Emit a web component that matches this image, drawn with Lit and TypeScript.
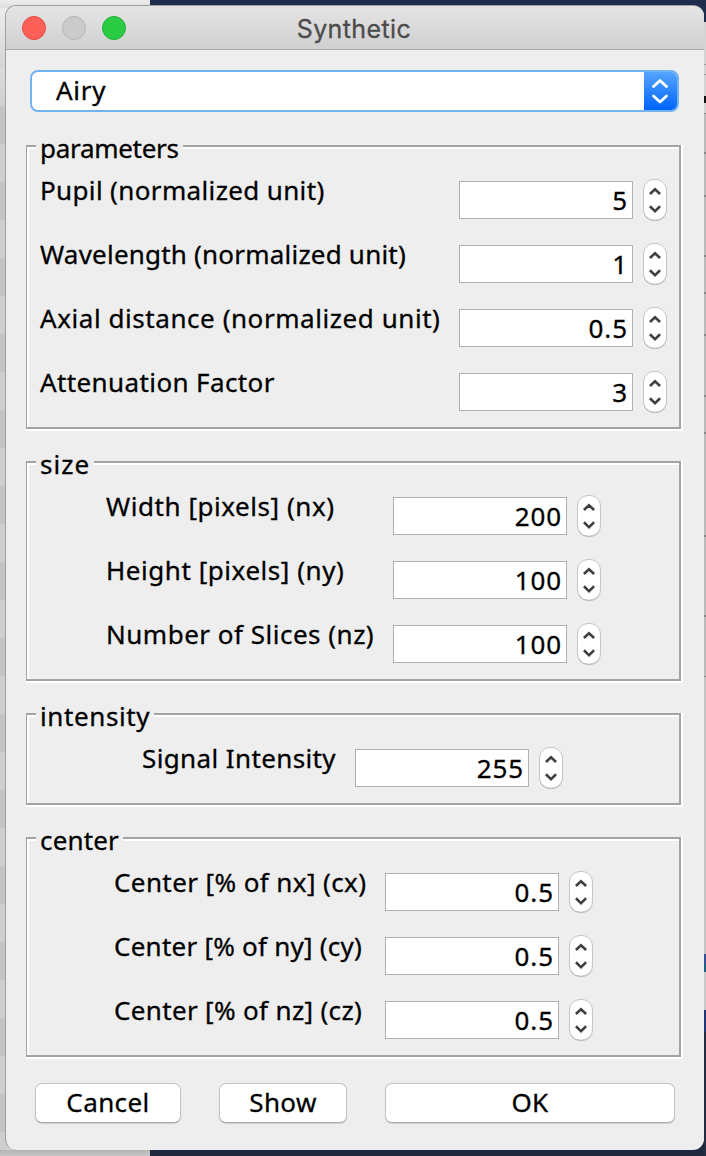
import { LitElement, html, css } from "lit";
import { customElement, property } from "lit/decorators.js";

interface Field { label: string; value: string; spacing: number; }

@customElement("number-spinner")
class NumberSpinner extends LitElement {
  @property() value = "";
  static styles = css`
    :host { display: flex; gap: 10px; align-items: center; height: 42px; }
    .field { box-sizing: border-box; width: 174px; height: 38px; border: 1px solid #b1b1b1; background: #fff;
      padding: 1px 4px 0 0; text-align: right; line-height: 35px; letter-spacing: 0.9px; }
    .stepper { width: 24px; height: 42px; display: block; overflow: visible; }
  `;
  render() {
    return html`<div class="field">${this.value}</div>
      <svg class="stepper" viewBox="0 0 24 42" fill="none">
        <rect x="0.5" y="1.5" width="23" height="40.6" rx="10.5" fill="#b0b0b0"/>
        <rect x="0.5" y="0.5" width="23" height="40.6" rx="10.5" fill="#fff" stroke="#c6c6c6" stroke-width="1"/>
        <path d="M6.9 15 L12 10.2 L17.1 15 M6.9 27.3 L12 32.1 L17.1 27.3" stroke="#404040" stroke-width="2.6"/>
      </svg>`;
  }
}

@customElement("app-root")
class AppRoot extends LitElement {
  static styles = css`
    :host { display: block; height: 1156px; box-sizing: border-box; padding: 5px 2px 6px 5px; overflow: hidden;
      font-family: "Noto Sans", "Liberation Sans", sans-serif; font-size: 26px; line-height: 30px; color: #000;
      letter-spacing: 0.4px; -webkit-text-stroke: 0.3px currentColor;
      background:
        linear-gradient(#b4b4b4, #c6c6c6) 0 100% / 150px 6px no-repeat,
        linear-gradient(#ededed, #dedede) 0 0 / 150px 8px no-repeat,
        linear-gradient(#eee, #eee0) 0 0 / 14px 110px no-repeat,
        repeating-linear-gradient(#cfcfcf 0 38px, #c3c5c5 38px 76px) 0 -8px / 14px 1194px no-repeat,
        linear-gradient(#1e2c4c 0 22px, #d4d4d4 22px 64px, #999 64px 65px, #d4d4d4 65px 74px, #999 74px 75px, #d4d4d4 75px 96px, #111 96px 103px, #d4d4d4 103px 113px, #888 113px 114px, #bbb 114px 152px, #888 152px 154px, #bbb 154px 195px, #888 195px 197px, #bbb 197px 255px, #888 255px 257px, #bbb 257px 292px, #888 292px 294px, #bbb 294px 334px, #888 334px 336px, #bbb 336px 395px, #888 395px 397px, #bbb 397px 432px, #888 432px 434px, #bbb 434px 535px, #888 535px 537px, #bbb 537px 615px, #888 615px 617px, #bbb 617px 676px, #888 676px 677px, #c4c4c4 677px 954px, #37509a 954px 964px, #1c6280 964px 972px, #c9c9c9 972px 1010px, #203573 1010px 1032px, #242c42 1032px) 100% 0 / 2px 1156px no-repeat,
        linear-gradient(#1d2b4c 50%, #20283e 50%); }
    .window { height: 1145px; box-sizing: border-box; border: 1px solid #a0a0a0; border-right: 0; border-bottom: 0;
      border-radius: 11px; overflow: hidden; background: #eee; }
    .bar { height: 43px; display: grid; grid-template-columns: 1fr auto 1fr; align-items: center; box-sizing: content-box;
      background: linear-gradient(#e5e5e5, #cfcfcf); border-bottom: 1px solid #a9a9a9; }
    .lights { display: flex; gap: 16px; padding-left: 16px; }
    .light { width: 24px; height: 24px; box-sizing: border-box; border-radius: 50%; border: 1px solid #b3b3b3; background: #cbcbcb; }
    .close { background: #fe5f57; border-color: #e24a43; }
    .zoom { background: #29cc42; border-color: #1fb034; }
    .title { font-family: Inter, sans-serif; font-size: 25px; letter-spacing: 0.4px; color: #4c4c4c; padding: 2px 2px 0 0; }
    .combo { box-sizing: border-box; margin: 20px 25px 0 24px; height: 42px; display: flex; border: 2px solid #74b3f2;
      border-radius: 8px; background: #fff; overflow: hidden; line-height: 37px; }
    .choice { flex: 1; padding-left: 24px; letter-spacing: 0.7px; }
    .arrows { width: 33px; height: 38px; background: linear-gradient(#55a5ff, #0064fb); display: block; }
    .groups { display: flex; flex-direction: column; gap: 30px; margin: 33px 21px 0 20px; }
    .group { box-sizing: border-box; border: solid #a3a3a3; border-width: 2px 2px 2px 1px;
      margin: 0 2px 2px 0; box-shadow: inset 2px 2px #fff, 0 2px #fff, 2px 2px #fff, 2px 0 #fff; }
    .legend { height: 28px; margin-top: -12px; margin-left: 9px; width: max-content; background: #eee; padding: 0 4px; line-height: 26px; }
    .rows { display: flex; flex-direction: column; gap: 22px; padding: 16px 0 14px; width: max-content; }
    .row { display: flex; justify-content: space-between; height: 42px; }
    .label { margin-top: -4px; white-space: nowrap; }
    .parameters { width: 627px; margin-left: 13px; }
    .size { width: 495px; margin-left: 79px; }
    .intensity { width: 421px; margin-left: 115px; }
    .center { width: 479px; margin-left: 87px; }
    .buttons { display: flex; gap: 38px; margin: 24px 29px 0; }
    .button { box-sizing: border-box; height: 40px; border: 1px solid #c4c4c4; border-bottom-color: #acacac; border-radius: 7px;
      background: #fff; text-align: center; line-height: 37px; box-shadow: 0 1px 1px #0002; }
    .cancel { width: 146px; }
    .show { width: 128px; }
    .ok { flex: 1; }
  `;
  groups: { name: string; spacing: number; fields: Field[] }[] = [
    { name: "parameters", spacing: -0.3, fields: [
      { label: "Pupil (normalized unit)", value: "5", spacing: 0.36 },
      { label: "Wavelength (normalized unit)", value: "1", spacing: 0.21 },
      { label: "Axial distance (normalized unit)", value: "0.5", spacing: 0.56 },
      { label: "Attenuation Factor", value: "3", spacing: 0.39 } ] },
    { name: "size", spacing: 1, fields: [
      { label: "Width [pixels] (nx)", value: "200", spacing: 0.55 },
      { label: "Height [pixels] (ny)", value: "100", spacing: 0.55 },
      { label: "Number of Slices (nz)", value: "100", spacing: 0.5 } ] },
    { name: "intensity", spacing: 0.6, fields: [
      { label: "Signal Intensity", value: "255", spacing: 0.38 } ] },
    { name: "center", spacing: 0.15, fields: [
      { label: "Center [% of nx] (cx)", value: "0.5", spacing: 0.4 },
      { label: "Center [% of ny] (cy)", value: "0.5", spacing: 0.24 },
      { label: "Center [% of nz] (cz)", value: "0.5", spacing: 0.34 } ] },
  ];
  render() {
    return html`<div class="window">
      <div class="bar"><div class="lights"><i class="light close"></i><i class="light"></i><i class="light zoom"></i></div>
        <div class="title">Synthetic</div><div></div></div>
      <div class="combo"><div class="choice">Airy</div>
        <svg class="arrows" viewBox="0 0 33 38" fill="none" stroke="#fff" stroke-width="2.8" stroke-linecap="round" stroke-linejoin="round">
          <path d="M9.5 14.5 L16 8.5 L22.5 14.5 M9.5 24 L16 30 L22.5 24"/></svg></div>
      <div class="groups">${this.groups.map(g => html`<div class="group">
        <div class="legend" style="letter-spacing:${g.spacing}px">${g.name}</div>
        <div class="rows ${g.name}">${g.fields.map(f => html`<div class="row">
          <div class="label" style="letter-spacing:${f.spacing}px">${f.label}</div>
          <number-spinner .value=${f.value}></number-spinner></div>`)}</div></div>`)}</div>
      <div class="buttons"><div class="button cancel">Cancel</div><div class="button show">Show</div><div class="button ok">OK</div></div>
    </div>`;
  }
}
